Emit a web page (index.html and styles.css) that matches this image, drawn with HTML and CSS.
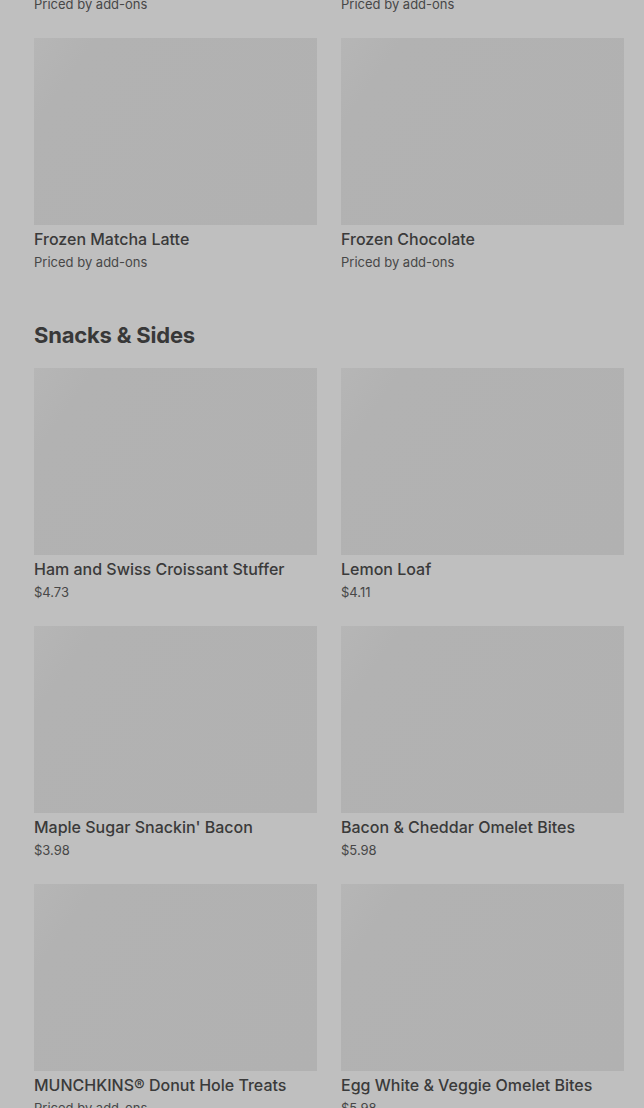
FILE: index.html
```html
<!DOCTYPE html>
<html lang="en">
<head>
<meta charset="utf-8">
<title>Menu</title>
<link rel="stylesheet" href="styles.css">
</head>
<body>
<main class="page">
  <section class="section section--scrolled">
    <div class="grid">
      <article class="card"><div class="thumb"></div><h3 class="name">Frozen Coffee</h3><p class="price">Priced by add-ons</p></article>
      <article class="card"><div class="thumb"></div><h3 class="name">Frozen Dunkaccino</h3><p class="price">Priced by add-ons</p></article>
      <article class="card"><div class="thumb"></div><h3 class="name">Frozen Matcha Latte</h3><p class="price">Priced by add-ons</p></article>
      <article class="card"><div class="thumb"></div><h3 class="name">Frozen Chocolate</h3><p class="price">Priced by add-ons</p></article>
    </div>
  </section>
  <section class="section">
    <h2 class="heading">Snacks &amp; Sides</h2>
    <div class="grid">
      <article class="card"><div class="thumb"></div><h3 class="name">Ham and Swiss Croissant Stuffer</h3><p class="price">$4.73</p></article>
      <article class="card"><div class="thumb"></div><h3 class="name">Lemon Loaf</h3><p class="price">$4.11</p></article>
      <article class="card"><div class="thumb"></div><h3 class="name">Maple Sugar Snackin' Bacon</h3><p class="price">$3.98</p></article>
      <article class="card"><div class="thumb"></div><h3 class="name">Bacon &amp; Cheddar Omelet Bites</h3><p class="price">$5.98</p></article>
      <article class="card"><div class="thumb"></div><h3 class="name">MUNCHKINS® Donut Hole Treats</h3><p class="price">Priced by add-ons</p></article>
      <article class="card"><div class="thumb"></div><h3 class="name">Egg White &amp; Veggie Omelet Bites</h3><p class="price">$5.98</p></article>
    </div>
  </section>
</main>
</body>
</html>
```

FILE: styles.css
```css
html, body {
  margin: 0;
  padding: 0;
  background: #bfbfbf;
  overflow: hidden;
}
body {
  font-family: Inter, "Noto Sans", sans-serif;
  color: #3a3a3a;
}
.page {
  padding: 0 20px 0 34px;
}
.section--scrolled {
  margin-top: -220px;
}
.section + .section {
  margin-top: 48px;
}
.heading {
  margin: 0 0 19px;
  font-size: 22px;
  line-height: 28px;
  font-weight: 700;
  color: #383838;
  letter-spacing: -0.2px;
}
.grid {
  display: grid;
  grid-template-columns: 283px 283px;
  column-gap: 24px;
  row-gap: 23px;
}
.card {
  display: flex;
  flex-direction: column;
}
.thumb {
  height: 187px;
  background: linear-gradient(125deg, #b6b6b6 0%, #b2b2b2 15%, #b1b1b1 100%);
}
.name {
  margin: 3px 0 0;
  font-size: 16px;
  line-height: 22px;
  font-weight: 500;
  color: #3a3a3a;
}
.price {
  margin: 1px 0 0;
  font-size: 13px;
  line-height: 22px;
  font-weight: 400;
  color: #474747;
}
```
